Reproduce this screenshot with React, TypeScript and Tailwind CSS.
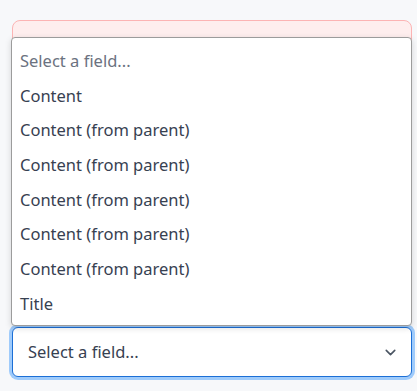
import { ChevronDown } from 'lucide-react';

const options = [
  'Content',
  'Content (from parent)',
  'Content (from parent)',
  'Content (from parent)',
  'Content (from parent)',
  'Content (from parent)',
  'Title',
];

export default function App() {
  return (
    <div className="relative min-h-[391px] w-[417px] bg-[#f7f8fa] font-['Noto_Sans',sans-serif]">
      <div className="flex flex-col pl-[12px] pr-[5px] pt-[20px]">
        {/* Error panel behind the open list */}
        <div className="h-[123px] rounded-lg border border-[#fcb4b4] bg-[#feeeee]" />

        {/* Another field, mostly hidden */}
        <div className="mt-[72px] h-[44px] rounded-md border border-[#c9ced6] bg-white" />

        {/* Select trigger */}
        <div className="mt-[68px] flex h-[50px] items-center justify-between rounded-md border border-[#1c6fd6] bg-white pl-[15px] pr-[12px] text-[16.5px] text-[#374151] ring-[3px] ring-[#9fcbfb]">
          <span>Select a field...</span>
          <ChevronDown className="h-[17px] w-[17px] text-[#4b5563]" strokeWidth={2.25} />
        </div>
      </div>

      {/* Open option list */}
      <div className="absolute left-[11px] top-[37px] w-[401px] rounded-[4px] border border-[#9c9c9c] bg-white pb-[3px] pt-[6px] shadow-[0_2px_6px_rgba(0,0,0,0.15)]">
        <div className="flex h-[34.7px] items-center pl-[8px] text-[16.5px] text-[#6b7280]">Select a field...</div>
        {options.map((o, i) => (
          <div key={i} className="flex h-[34.7px] items-center pl-[8px] text-[16.5px] text-[#374151]">
            {o}
          </div>
        ))}
      </div>
    </div>
  );
}
